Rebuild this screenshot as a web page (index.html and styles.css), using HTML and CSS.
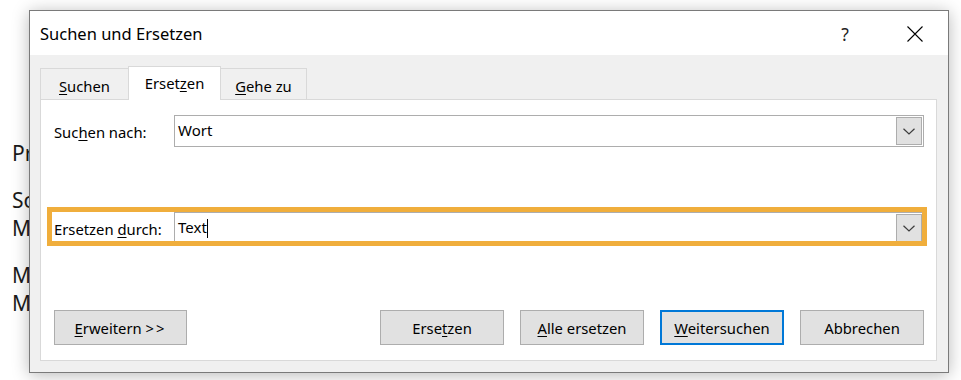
FILE: index.html
```html
<!DOCTYPE html>
<html lang="de">
<head>
<meta charset="utf-8">
<title>Suchen und Ersetzen</title>
<link rel="stylesheet" href="styles.css">
</head>
<body>
<div class="doc">
  <p>Probe</p>
  <p>Sollen mehrere Wörter ersetzt werden,<br>Mit</p>
  <p>Mit einem Klick auf Alle ersetzen<br>Mehrere Stellen auf einmal ändern.</p>
</div>

<div class="dialog">
  <div class="titlebar">
    <span class="title">Suchen und Ersetzen</span>
    <span class="help">?</span>
    <span class="close"><svg width="16" height="16" viewBox="0 0 16 16"><path d="M0.5 0.5 L15.5 15.5 M15.5 0.5 L0.5 15.5" stroke="#000" stroke-width="1.1" fill="none"/></svg></span>
  </div>
  <div class="dbody">
    <div class="tabs">
      <div class="tab tab-suchen"><u>S</u>uchen</div>
      <div class="tab tab-ersetzen active">Erset<u>z</u>en</div>
      <div class="tab tab-gehe"><u>G</u>ehe zu</div>
    </div>
    <div class="panel">
      <div class="field field-find">
        <span class="label">Suc<u>h</u>en nach:</span>
        <div class="combo">
          <span class="val">Wort</span>
          <span class="dd"><svg width="12" height="7" viewBox="0 0 12 7"><path d="M0.5 0.8 L6 6 L11.5 0.8" stroke="#3c3c3c" stroke-width="1.2" fill="none"/></svg></span>
        </div>
      </div>
      <div class="field field-replace">
        <span class="label">Ersetzen <u>d</u>urch:</span>
        <div class="combo">
          <span class="val">Text<span class="caret"></span></span>
          <span class="dd"><svg width="12" height="7" viewBox="0 0 12 7"><path d="M0.5 0.8 L6 6 L11.5 0.8" stroke="#3c3c3c" stroke-width="1.2" fill="none"/></svg></span>
        </div>
        <div class="highlight"></div>
      </div>
      <div class="buttons">
        <button class="btn btn-more"><u>E</u>rweitern <span class="arrows">&gt;&gt;</span></button>
        <div class="btn-group">
          <button class="btn">Erse<u>t</u>zen</button>
          <button class="btn"><u>A</u>lle ersetzen</button>
          <button class="btn btn-default"><u>W</u>eitersuchen</button>
          <button class="btn">Abbrechen</button>
        </div>
      </div>
    </div>
  </div>
</div>
</body>
</html>
```

FILE: styles.css
```css
* { box-sizing: border-box; }

html, body {
  margin: 0;
  padding: 0;
  background: #ffffff;
  width: 961px;
  height: 380px;
  overflow: hidden;
}

body {
  position: relative;
  font-family: "Segoe UI", "Noto Sans", "Open Sans", sans-serif;
  color: #000;
}

u { text-decoration: underline; text-underline-offset: 2px; text-decoration-thickness: 1px; }

/* background document */
.doc {
  padding: 139px 0 0 12px;
  font-family: "Noto Sans", sans-serif;
  font-size: 21px;
  line-height: 28px;
  color: #1a1a1a;
  white-space: nowrap;
}
.doc p { margin: 0 0 19px; }

/* dialog window */
.dialog {
  position: absolute;
  left: 29px;
  top: 10px;
  width: 920px;
  height: 363px;
  border: 1px solid #7a7a7a;
  background: #f0f0f0;
  box-shadow: 0 2px 16px rgba(0, 0, 0, 0.28);
  display: flex;
  flex-direction: column;
}

.titlebar {
  height: 44px;
  flex: none;
  background: #fff;
  display: flex;
  align-items: center;
  padding: 0 10px 0 10px;
}
.title {
  flex: 1;
  font-size: 16.5px;
  padding-top: 1px;
}
.help {
  width: 46px;
  text-align: center;
  font-size: 17.5px;
  color: #222;
  padding-top: 2px;
}
.close {
  width: 46px;
  margin-left: 24px;
  display: flex;
  justify-content: center;
  align-items: center;
  padding-top: 1px;
}
.close svg { display: block; }

.dbody {
  flex: 1;
  display: flex;
  flex-direction: column;
  padding: 11px 11px 11px 10px;
}

/* tabs */
.tabs {
  display: flex;
  align-items: flex-end;
  height: 33px;
  flex: none;
  position: relative;
  z-index: 1;
}
.tab {
  height: 31px;
  border: 1px solid #d9d9d9;
  border-bottom: none;
  background: #f0f0f0;
  font-size: 14.8px;
  line-height: 20px;
  padding-top: 7px;
  text-align: center;
  margin-right: -1px;
}
.tab-suchen { width: 89px; }
.tab-ersetzen { width: 93px; }
.tab-gehe { width: 87px; }
.tab.active {
  height: 34px;
  margin-bottom: -1px;
  background: #fff;
  padding-top: 6px;
  position: relative;
  z-index: 2;
}

/* panel */
.panel {
  flex: 1;
  background: #fff;
  border: 1px solid #d9d9d9;
  display: flex;
  flex-direction: column;
  padding: 15px 12px 15px 13px;
}

.field {
  display: flex;
  align-items: center;
  height: 32px;
  font-size: 14.8px;
  position: relative;
}
.field-replace { margin-top: 65px; }

.label {
  width: 120px;
  flex: none;
  padding-top: 1px;
}

.combo {
  flex: 1;
  height: 32px;
  border: 1px solid #adadad;
  padding: 1px 1px 1px 3px;
  display: flex;
  align-items: stretch;
  background: #fff;
}
.val {
  flex: 1;
  display: flex;
  align-items: center;
  font-size: 15px;
  padding-bottom: 3px;
}
.caret {
  display: inline-block;
  width: 1px;
  height: 19px;
  background: #000;
  margin-top: 3px;
}
.dd {
  width: 26px;
  flex: none;
  background: #e1e1e1;
  border: 1px solid #adadad;
  display: flex;
  align-items: center;
  justify-content: center;
}
.dd svg { display: block; }

.highlight {
  position: absolute;
  left: -7px;
  right: -3px;
  top: -5px;
  height: 39px;
  border: 5px solid #f0ae3c;
  pointer-events: none;
}

/* buttons */
.buttons {
  margin-top: auto;
  display: flex;
  justify-content: space-between;
  align-items: center;
}
.btn-group {
  display: flex;
  gap: 16px;
}
.btn {
  height: 35px;
  width: 124px;
  background: #e1e1e1;
  border: 1px solid #adadad;
  font-family: "Segoe UI", "Noto Sans", "Open Sans", sans-serif;
  font-size: 14.8px;
  color: #000;
  padding: 0;
  margin: 0;
}
.btn-more { width: 133px; }
.arrows { letter-spacing: 2px; }
.btn-default {
  border: 2px solid #0078d7;
}
```
